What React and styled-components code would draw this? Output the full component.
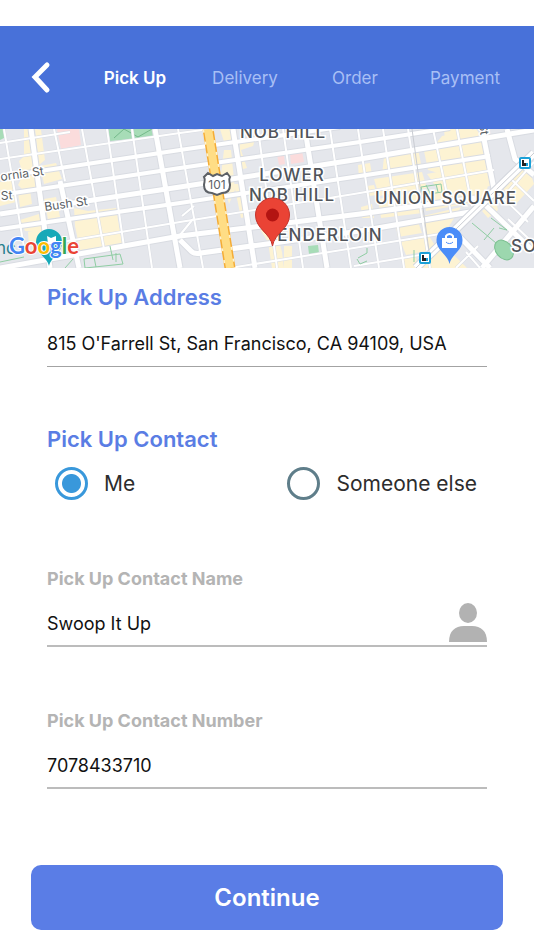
import React, { useState } from "react";
import styled, { createGlobalStyle } from "styled-components";

const GlobalStyle = createGlobalStyle`
  *, *::before, *::after { box-sizing: border-box; }
  body {
    margin: 0;
    background: #fff;
    color: #111;
    font-family: Inter, "Liberation Sans", sans-serif;
  }
  button, input { font: inherit; color: inherit; }
`;

const Screen = styled.div`
  min-height: 100vh;
  padding-top: 26px;
  padding-bottom: 20px;
`;

const Header = styled.header`
  display: flex;
  align-items: center;
  height: 103px;
  padding-right: 14px;
  background: #4871d9;
`;

const BackButton = styled.button`
  display: flex;
  align-items: center;
  justify-content: center;
  flex: 0 0 80px;
  height: 56px;
  padding: 0;
  border: 0;
  background: none;
  cursor: pointer;
`;

const Steps = styled.nav`
  display: grid;
  grid-template-columns: repeat(4, 1fr);
  flex: 1;
`;

const Step = styled.a`
  color: ${({ $active }) => ($active ? "#fff" : "#a8bff5")};
  font-size: 17px;
  font-weight: ${({ $active }) => ($active ? 600 : 400)};
  line-height: 24px;
  text-align: center;
  text-decoration: none;
`;

const MapView = styled.svg`
  display: block;
  width: 100%;
  height: 139px;
`;

const AreaLabel = styled.text`
  fill: #50545a;
  stroke: #fff;
  stroke-width: 3px;
  paint-order: stroke;
  font-size: 17px;
  font-weight: 500;
  letter-spacing: 1px;
  text-anchor: middle;
`;

const StreetLabel = styled.text`
  fill: #5b5f66;
  stroke: #fff;
  stroke-width: 3px;
  paint-order: stroke;
  font-size: 12px;
`;

const PlaceLabel = styled.text`
  fill: #267f8c;
  font-size: 17px;
`;

const Wordmark = styled.text`
  font-family: Lato, sans-serif;
  font-size: 22px;
  font-weight: 700;
  stroke: #fff;
  stroke-width: 2px;
  paint-order: stroke;
`;

const Form = styled.form`
  padding: 15px 31px 0;
`;

const Fields = styled.div`
  padding: 0 16px;
`;

const Group = styled.div`
  margin-bottom: ${({ $gap }) => $gap}px;
`;

const Title = styled.label`
  display: block;
  margin-bottom: 8px;
  color: #5a7de4;
  font-size: 22px;
  font-weight: 600;
  line-height: 28px;
`;

const FieldLabel = styled.label`
  display: block;
  margin-bottom: 8px;
  color: #b4b4b4;
  font-size: 18px;
  font-weight: 700;
  line-height: 24px;
`;

const Line = styled.div`
  display: flex;
  align-items: flex-end;
  height: 48px;
  border-bottom: ${({ $thick }) => ($thick ? "2px solid #bcbcbc" : "1px solid #a3a3a3")};
`;

const TextInput = styled.input`
  flex: 1;
  min-width: 0;
  height: 100%;
  padding: 2px 0 0;
  border: 0;
  outline: 0;
  background: none;
  font-size: 18px;
`;

const ContactButton = styled.button`
  padding: 0 0 3px;
  border: 0;
  background: none;
  cursor: pointer;

  svg { display: block; }
`;

const Choices = styled.div`
  display: flex;
  justify-content: space-between;
  padding: 2px 10px 0 8px;
`;

const Choice = styled.label`
  display: flex;
  align-items: center;
  gap: 16px;
  height: 40px;
  color: #2d2d2d;
  font-size: 21px;
  cursor: pointer;
`;

const Radio = styled.input`
  appearance: none;
  width: 33px;
  height: 33px;
  margin: 0;
  border: 3px solid #5f7e8a;
  border-radius: 50%;
  background: #fff;

  &:checked {
    border-color: #3998db;
    background: radial-gradient(circle, #3998db 9px, #fff 10px);
  }
`;

const Continue = styled.button`
  display: block;
  width: 100%;
  height: 65px;
  border: 0;
  border-radius: 10px;
  background: #5a7de6;
  color: #fff;
  font-size: 24px;
  font-weight: 600;
  cursor: pointer;
`;

const steps = ["Pick Up", "Delivery", "Order", "Payment"];

const commercial = [
  "M24 129h7l5 60 -12 2 -6-6 5-10 -4-14 5-5z",
  "M35 129l6 1 4 30 -6 5z M40 166l16-3 6 16 -18 5z",
  "M0 182l12-2 4 22 -16 4z M18 192l12-2 2 14 -12 3z",
  "M20 220l19-6 4 18 -18 -1z M28 232l16-3 3 16 -18 0z",
  "M44 199l12-2 4 20 -12 2z M74 208l14 3 28-3 6 36 -42 6 -5-24z",
  "M220 129h14v16h-9z M240 140l16-4 -3 10 -12 4 6 18 -8 2z",
  "M224 150l7 0 4 40 -6 14 -8-30z M234 184l9 0 6 32 -8 2z",
  "M258 226l16-4 8 30 2 16h-12l-4-26z M284 246h8v22h-8z",
  "M384 157l12-4 6 0 16-4 4 20 -40 6z M424 151l10-5 8-10 34-7 6 8 5 30 -42 8 -17-5z",
  "M358 165l12-2 2 12 -13 3z M374 179l48-7 5 16 -48 8z M427 174l64-13 4 24 -53 10z",
  "M367 186l7-1 3 10 -8 1z M361 207l11-3 2 14 -12 0z M378 199l40-7 5 21 -42 5z",
  "M421 192l68-9 -6 18 -57 10z M395 222l22-3 5 14 -24 4z M400 240l28-6 9 15 -31 6z",
  "M423 216l38-9 -18 29 -17-1z M400 257l15-2 4 13h-14z M432 250l12-5 23 23h-50z",
  "M500 183l18-17 14 12 2 6 -20 22z M482 211l14-10 2 9 -10 8z M444 129h28l-3 18 -23 5z",
];

const avenues = [
  "M0 268L180 236L360 214L475 198",
  "M0 214L180 187L360 159L534 130",
  "M155 129L180 268",
  "M180 240L190 250Q194 255 201 253L360 231L470 212",
  "M60 181L79 268",
  "M233 129L255 268",
  "M31 129L50 268",
  "M305 129L327 268",
  "M482 129L495 194",
  "M507 129L515 159L534 175",
  "M451 228L490 268M480 200L534 252M482 268L534 206",
];

const streets = [
  "M0 177L180 150L340 127",
  "M0 195L180 168L360 142L450 128",
  "M0 229L180 203L360 176L490 156",
];

const lanes = [
  "M0 159L180 133L210 129M0 143L70 132",
  "M50 244L180 222L354 194L494 170",
  "M230 268L354 248L440 234M354 266L420 255",
  "M4 129L25 253M54 129L65 181M82 129L104 249M107 129L124 247M132 129L152 268",
  "M178 129L203 268M203 129L222 230M258 129L277 268M283 129L303 268M330 129L351 268",
  "M358 129L379 268M383 129L404 268M408 129L430 268M433 129L451 213M457 129L472 206",
  "M466 252L480 268M508 219L530 240M500 195L528 222M512 180L534 201M456 268L478 246M498 203L534 162",
  "M180 235L193 219M182 216L194 206",
];

function StreetMap() {
  return (
    <MapView viewBox="0 129 534 139" preserveAspectRatio="xMidYMid slice" role="img" aria-label="Map of the pick up address">
      <rect y="129" width="534" height="139" fill="#e5e7ec" />
      <g fill="#fdf3d3">
        {commercial.map((d) => <path key={d} d={d} />)}
      </g>
      <path d="M57 129h22l2 16 -20 4z M277 155l7 1 1 8 -6 1z M290 153l12-2 2 11 -13 2z" fill="#fbdcdc" />
      <path d="M108 129h46l-1 8 -43 4z M0 129h4v9l-4 2z M308 246l10-1 1 8 -10 1z" fill="#a7dcb7" />
      <path d="M114 138l10-9 14 8 14-8" fill="none" stroke="#74b98a" />

      {[[avenues, 6], [streets, 5], [lanes, 2]].map(([set, w]) => (
        <g key={w} fill="none" stroke="#d9dce2" strokeWidth={w + 1}>
          {set.map((d) => <path key={d} d={d} />)}
        </g>
      ))}
      {[[avenues, 5], [streets, 4], [lanes, 2]].map(([set, w]) => (
        <g key={w} fill="none" stroke="#fff" strokeWidth={w}>
          {set.map((d) => <path key={d} d={d} />)}
        </g>
      ))}

      <path d="M416 268L534 153" stroke="#d3d6dd" strokeWidth="9" />
      <path d="M416 268L534 153" stroke="#fff" strokeWidth="7" />
      <path d="M416 268L534 153M412 129L430 258" stroke="#c9ccd2" strokeWidth="1" />

      <g fill="none" stroke="#8fcda3" strokeWidth="1">
        <path d="M84 259l36-5 3 10 -38 4zM94 257l2 10M110 246l3 14M116 253v9M65 268l8-9M0 262l24-5" />
        <path d="M421 187l20-3 1 8 -19 3zM426 185l4 8M436 184l2 8M472 223l24 20M484 240l10-12M491 218l16 12 -8-2M358 258l9-5 0-5M357 259l3 5 7-3M414 262v-12" />
      </g>
      <ellipse cx="504" cy="250" rx="8" ry="11" transform="rotate(-40 504 250)" fill="#9cd7ae" stroke="#7cc091" />

      <path d="M208 129L230 268" stroke="#f5ac35" strokeWidth="11" />
      <path d="M208 129L230 268" stroke="#fdf3d3" strokeWidth="11" strokeDasharray="3 9" />
      <path d="M208 129L230 268" stroke="#ffdd85" strokeWidth="8" />
      <path d="M208 173l5 3 4-2 5 2 5-3 3 4c-2 3 0 5 0 8 0 5-3 8-8 8l-5 2 -5-2c-5 0-8-3-8-8 0-3 2-5 0-8z" fill="#fff" stroke="#5c6066" strokeWidth="2" />
      <StreetLabel x="217" y="189" textAnchor="middle">101</StreetLabel>

      <AreaLabel x="283" y="138">NOB HILL</AreaLabel>
      <AreaLabel x="292" y="181">LOWER</AreaLabel>
      <AreaLabel x="292" y="201">NOB HILL</AreaLabel>
      <AreaLabel x="330" y="241">ENDERLOIN</AreaLabel>
      <AreaLabel x="446" y="204">UNION SQUARE</AreaLabel>
      <AreaLabel x="524" y="252">SO</AreaLabel>
      <StreetLabel x="1" y="181" transform="rotate(-8 1 181)">ornia St</StreetLabel>
      <StreetLabel x="1" y="200" transform="rotate(-3 1 200)">St</StreetLabel>
      <StreetLabel x="45" y="211" transform="rotate(-8 45 211)">Bush St</StreetLabel>
      <StreetLabel x="479" y="124" transform="rotate(82 479 124)">St</StreetLabel>

      <path d="M49 266c-2-9-13-12-13-24a13 13 0 0 1 26 0c0 12-11 15-13 24z" fill="#17a9b8" />
      <path d="M47 236l4 2 5-2v8h-8z" fill="#fff" />
      <PlaceLabel x="-4" y="254">nc</PlaceLabel>
      <Wordmark x="9" y="254">
        <tspan fill="#4285f4">G</tspan>
        <tspan fill="#ea4335">o</tspan>
        <tspan fill="#fbbc05">o</tspan>
        <tspan fill="#4285f4">g</tspan>
        <tspan fill="#34a853">l</tspan>
        <tspan fill="#ea4335">e</tspan>
      </Wordmark>

      {[[425, 258], [525, 163]].map(([x, y]) => (
        <g key={x}>
          <rect x={x - 5} y={y - 5} width="10" height="10" rx="1" fill="#fff" stroke="#1ba0d7" strokeWidth="2" />
          <path d={`M${x - 3} ${y - 3}h2v3h2v3h-4z`} fill="#222" />
          <path d={`M${x + 1} ${y}h2v3h-2z`} fill="#1ba0d7" />
        </g>
      ))}

      <path d="M449.500 264c-2-10-13-13-13-24a13 13 0 0 1 26 0c0 11-11 14-13 24z" fill="#4b8df8" />
      <path d="M442 238h15v10h-15z" fill="#fff" />
      <path d="M446 238v-2a4 4 0 0 1 7 0v2" fill="none" stroke="#fff" strokeWidth="2" />
      <path d="M446 242a4 3 0 0 0 7 0" fill="none" stroke="#4b8df8" strokeWidth="1" />

      <path d="M272.500 246c-2-13-17-17-17-31a17 17 0 0 1 34 0c0 14-15 18-17 31z" fill="#ea4335" stroke="#c5342b" strokeWidth="1" />
      <circle cx="272.500" cy="215" r="6.500" fill="#b31412" />
    </MapView>
  );
}

export default function App() {
  const [contact, setContact] = useState("me");

  return (
    <Screen>
      <GlobalStyle />
      <Header>
        <BackButton type="button" aria-label="Back">
          <svg width="22" height="34" viewBox="0 0 22 34" fill="none" stroke="#fff" strokeWidth="5">
            <path d="M18 4L6 16L18 29" strokeLinecap="round" />
          </svg>
        </BackButton>
        <Steps>
          {steps.map((step, i) => (
            <Step key={step} href="#" $active={i === 0} aria-current={i === 0 ? "step" : undefined}>
              {step}
            </Step>
          ))}
        </Steps>
      </Header>
      <StreetMap />
      <Form onSubmit={(e) => e.preventDefault()}>
        <Fields>
          <Group $gap={58}>
            <Title htmlFor="address">Pick Up Address</Title>
            <Line>
              <TextInput id="address" defaultValue="815 O'Farrell St, San Francisco, CA 94109, USA" />
            </Line>
          </Group>
          <Group $gap={64} role="radiogroup" aria-labelledby="contact-title">
            <Title as="div" id="contact-title">Pick Up Contact</Title>
            <Choices>
              <Choice>
                <Radio type="radio" name="contact" checked={contact === "me"} onChange={() => setContact("me")} />
                Me
              </Choice>
              <Choice>
                <Radio type="radio" name="contact" checked={contact === "other"} onChange={() => setContact("other")} />
                Someone else
              </Choice>
            </Choices>
          </Group>
          <Group $gap={62}>
            <FieldLabel htmlFor="name">Pick Up Contact Name</FieldLabel>
            <Line $thick>
              <TextInput id="name" defaultValue="Swoop It Up" />
              <ContactButton type="button" aria-label="Choose a contact">
                <svg width="38" height="39" viewBox="0 0 38 39" fill="#b2b2b2">
                  <ellipse cx="19" cy="10" rx="9" ry="10" />
                  <path d="M0 39C0 28 6 23 15 23h8c9 0 15 5 15 16z" />
                </svg>
              </ContactButton>
            </Line>
          </Group>
          <Group $gap={76}>
            <FieldLabel htmlFor="number">Pick Up Contact Number</FieldLabel>
            <Line $thick>
              <TextInput id="number" type="tel" defaultValue="7078433710" />
            </Line>
          </Group>
        </Fields>
        <Continue type="submit">Continue</Continue>
      </Form>
    </Screen>
  );
}
